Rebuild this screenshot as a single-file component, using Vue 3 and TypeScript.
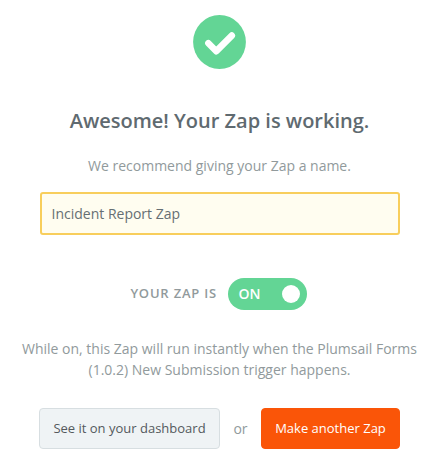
<script setup lang="ts">
import { ref } from 'vue'

const zapName = ref<string>('Incident Report Zap')
const isOn = ref<boolean>(true)
</script>

<template>
  <main class="page">
    <svg class="badge" viewBox="0 0 53 54" aria-hidden="true">
      <ellipse cx="26.5" cy="27" rx="26.4" ry="27" fill="#63d595" />
      <path d="M15.4 28.2 L23.3 36.2 L38.8 20.6" fill="none" stroke="#fff" stroke-width="6.6" stroke-linecap="round" stroke-linejoin="round" />
    </svg>
    <h1 class="title">Awesome! Your Zap is working.</h1>
    <p class="hint">We recommend giving your Zap a name.</p>
    <input v-model="zapName" class="name" type="text" spellcheck="false" />
    <div class="status">
      <span class="status-label">YOUR ZAP IS</span>
      <button class="toggle" type="button" @click="isOn = !isOn">
        <span class="toggle-text">{{ isOn ? 'ON' : 'OFF' }}</span>
        <span class="knob"></span>
      </button>
    </div>
    <p class="note">While on, this Zap will run instantly when the Plumsail Forms (1.0.2) New Submission trigger happens.</p>
    <div class="actions">
      <button class="btn secondary" type="button">See it on your dashboard</button>
      <span class="or">or</span>
      <button class="btn primary" type="button">Make another Zap</button>
    </div>
  </main>
</template>

<style>
body {
  background: #fff;
}
</style>

<style scoped>
.page {
  box-sizing: border-box;
  width: 439px;
  height: 468px;
  padding-top: 15px;
  display: flex;
  flex-direction: column;
  align-items: center;
  font-family: 'Open Sans', sans-serif;
  font-size: 14px;
  line-height: 21px;
  color: #919a9c;
  text-align: center;
}
.badge {
  display: block;
  width: 53px;
  height: 54px;
}
.title {
  margin: 37px 0 0;
  font-size: 20px;
  line-height: 30px;
  font-weight: 600;
  color: #5f6a70;
  white-space: nowrap;
}
.hint {
  margin: 19px 0 0;
}
.name {
  box-sizing: border-box;
  width: 360px;
  height: 43px;
  margin: 16px 0 0 1px;
  padding: 0 9.5px;
  border: 2px solid #f8ce5c;
  border-radius: 3px;
  background: #fffdf0;
  font: inherit;
  color: #666f73;
  outline: none;
}
.status {
  display: flex;
  align-items: center;
  justify-content: flex-end;
  gap: 10.5px;
  width: 175px;
  margin-top: 43px;
}
.status-label {
  font-size: 13px;
  line-height: 20px;
  font-weight: 600;
  letter-spacing: 0.8px;
  margin-bottom: 2px;
  white-space: nowrap;
}
.toggle {
  box-sizing: border-box;
  display: flex;
  flex-shrink: 0;
  align-items: center;
  justify-content: space-between;
  width: 79px;
  height: 32px;
  padding: 0 7px 0 11px;
  border: 0;
  border-radius: 16px;
  background: #63d595;
  color: #fff;
  font: 600 14px/21px 'Open Sans', sans-serif;
}
.toggle-text {
  margin-bottom: 1px;
}
.knob {
  width: 18px;
  height: 18px;
  border-radius: 50%;
  background: #fff;
}
.status {
  margin-right: 1px;
}
.note {
  width: 400px;
  margin: 28px 0 0;
}
.actions {
  display: flex;
  align-items: center;
  justify-content: space-between;
  width: 361px;
  margin-top: 28px;
}
.btn {
  box-sizing: border-box;
  height: 41px;
  padding: 0 0 2px;
  border: 1px solid #d7dee1;
  border-radius: 4px;
  font: 13px/20px 'Open Sans', sans-serif;
  white-space: nowrap;
}
.secondary {
  width: 181px;
  background: #eff3f5;
  color: #54595d;
}
.primary {
  width: 139px;
  border-color: #fa5508;
  background: #fa5508;
  color: #fff;
  font-weight: 500;
}
</style>
